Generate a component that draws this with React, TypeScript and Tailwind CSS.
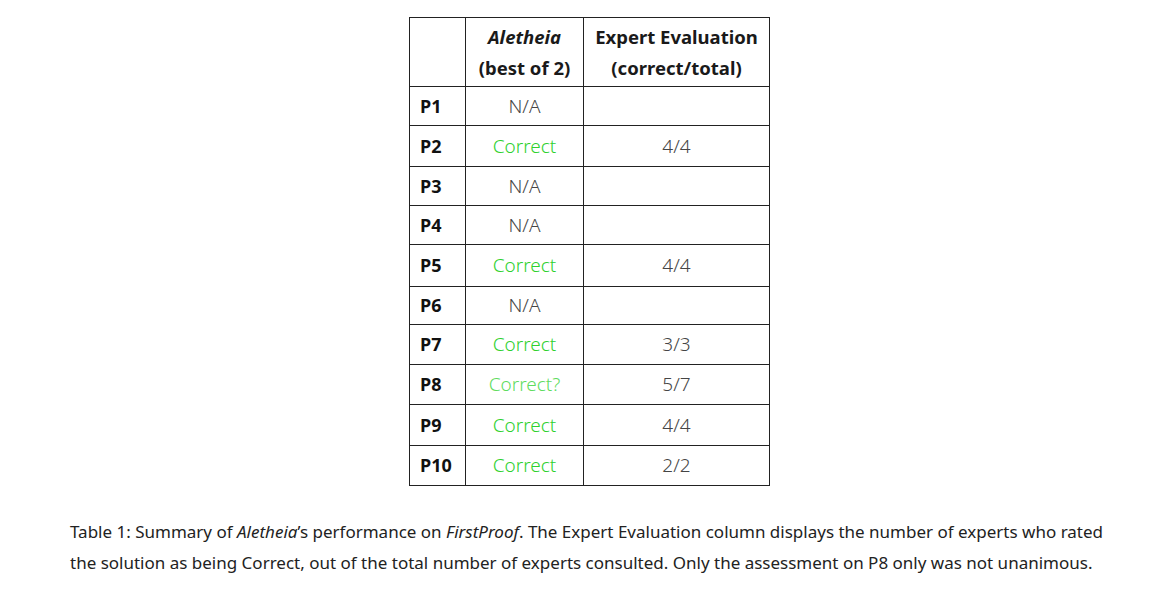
const rows: { p: string; result: string; evalText: string; h: number }[] = [
  { p: "P1", result: "N/A", evalText: "", h: 39 },
  { p: "P2", result: "Correct", evalText: "4/4", h: 41 },
  { p: "P3", result: "N/A", evalText: "", h: 39 },
  { p: "P4", result: "N/A", evalText: "", h: 39 },
  { p: "P5", result: "Correct", evalText: "4/4", h: 42 },
  { p: "P6", result: "N/A", evalText: "", h: 38 },
  { p: "P7", result: "Correct", evalText: "3/3", h: 40 },
  { p: "P8", result: "Correct?", evalText: "5/7", h: 40 },
  { p: "P9", result: "Correct", evalText: "4/4", h: 41 },
  { p: "P10", result: "Correct", evalText: "2/2", h: 40 },
];

function resultColor(r: string): string {
  if (r === "Correct") return "text-[#2ed12e]";
  if (r === "Correct?") return "text-[#5fdc5f]";
  return "text-[#454545]";
}

export default function App() {
  return (
    <div className="w-[1153px] h-[595px] bg-white font-['Noto_Sans','Open_Sans',sans-serif] text-[#1a1a1a]">
      <div className="pt-[17px] pl-[409px]">
        <table className="border-collapse border border-[#222] text-[18px]">
          <thead>
            <tr className="h-[69px]">
              <th className="w-[56px] border border-[#222]"></th>
              <th className="w-[118px] border border-[#222] font-bold leading-[31px] text-center text-[18.5px]">
                <div className="italic">Aletheia</div>
                <div>(best of 2)</div>
              </th>
              <th className="w-[186px] border border-[#222] font-bold leading-[31px] text-center text-[18.5px]">
                <div>Expert Evaluation</div>
                <div>(correct/total)</div>
              </th>
            </tr>
          </thead>
          <tbody>
            {rows.map((r) => (
              <tr key={r.p} style={{ height: r.h }}>
                <td className="border border-[#222] pl-[10px] font-bold text-[#111]">{r.p}</td>
                <td className={`border border-[#222] text-center font-light text-[19px] ${resultColor(r.result)}`}>
                  {r.result}
                </td>
                <td className="border border-[#222] text-center font-light text-[19px] text-[#454545]">{r.evalText}</td>
              </tr>
            ))}
          </tbody>
        </table>
      </div>
      <p className="mt-[30px] ml-[70px] w-[1050px] text-[17px] leading-[31px] text-[#222]">
        Table 1: Summary of <em>Aletheia</em>’s performance on <em>FirstProof</em>. The Expert Evaluation column displays the number of experts who rated the solution as being Correct, out of the total number of experts consulted. Only the assessment on P8 only was not unanimous.
      </p>
    </div>
  );
}
